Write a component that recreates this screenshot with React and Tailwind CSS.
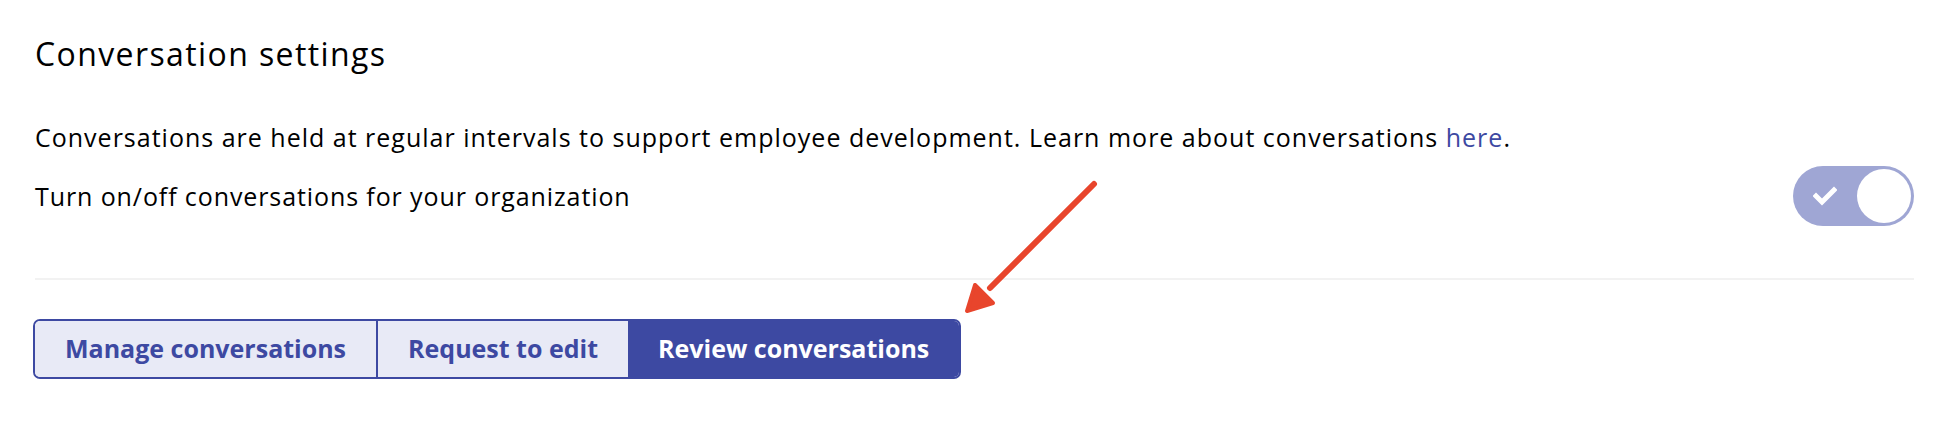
import React from "react";

export default function App() {
  return (
    <div className="relative w-[1936px] h-[446px] bg-white overflow-hidden" style={{ fontFamily: "'Open Sans', Lato, sans-serif" }}>
      <div className="pl-[35px] pr-[22px] pt-[34px]">
        <h1 className="text-[32px] leading-[40px] text-black font-normal tracking-[1.4px]">Conversation settings</h1>
        <p className="mt-[48px] text-[25px] leading-[30px] text-black tracking-[1px]">
          Conversations are held at regular intervals to support employee development. Learn more about conversations{" "}
          <a className="text-[#3d49a2]">here</a>.
        </p>
        <div className="flex items-center justify-between mt-[14px]">
          <span className="text-[25px] leading-[30px] text-black tracking-[0.9px]">Turn on/off conversations for your organization</span>
          <div className="w-[121px] h-[60px] rounded-full bg-[#9fa6d4] flex items-center justify-between pl-[20px] pr-[3px]">
            <svg width="24" height="20" viewBox="0 0 24 20">
              <path d="M3 10 L9 16 L21 4" fill="none" stroke="white" strokeWidth="5" strokeLinecap="square" />
            </svg>
            <div className="w-[54px] h-[54px] rounded-full bg-white" />
          </div>
        </div>
        <div className="mt-[52px] h-[2px] bg-[#f2f2f2]" />
        <div className="mt-[39px] ml-[-2px] inline-flex h-[60px] rounded-[7px] border-2 border-[#3d49a2] overflow-hidden">
          <button className="px-[30px] bg-[#e8eaf6] text-[#3d49a2] font-bold text-[25px] border-r-2 border-[#3d49a2]">Manage conversations</button>
          <button className="px-[30px] bg-[#e8eaf6] text-[#3d49a2] font-bold text-[25px]">Request to edit</button>
          <button className="px-[30px] bg-[#3d49a2] text-white font-bold text-[25px]">Review conversations</button>
        </div>
      </div>
      <svg className="absolute left-0 top-0" width="1936" height="446">
        <line x1="1094" y1="184" x2="990" y2="288" stroke="#e8452c" strokeWidth="6" strokeLinecap="round" />
        <polygon points="967,311 975,285 993,303" fill="#e8452c" stroke="#e8452c" strokeWidth="4" strokeLinejoin="round" />
      </svg>
    </div>
  );
}
